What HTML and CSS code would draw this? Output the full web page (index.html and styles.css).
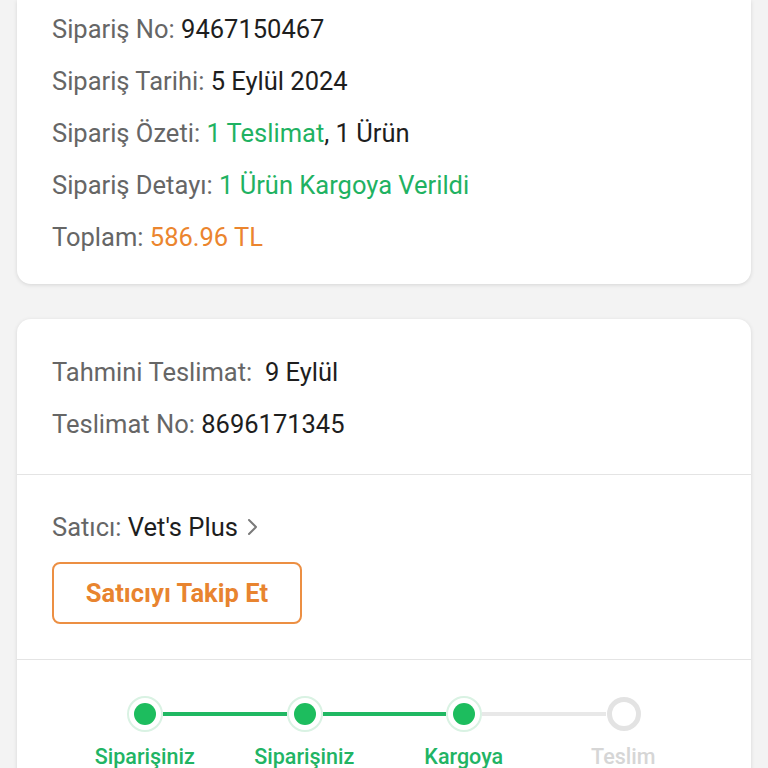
FILE: index.html
```html
<!DOCTYPE html>
<html lang="tr">
<head>
    <meta charset="UTF-8">
    <meta name="viewport" content="width=device-width, initial-scale=1.0">
    <title>Sipariş Detayı</title>
    <link rel="stylesheet" href="styles.css">
</head>
<body>

    <div class="page">
        <div class="card card-top">
            <div class="row"><span class="label">Sipariş No:</span> <span class="value">9467150467</span></div>
            <div class="row"><span class="label">Sipariş Tarihi:</span> <span class="value">5 Eylül 2024</span></div>
            <div class="row"><span class="label">Sipariş Özeti:</span> <span class="green">1 Teslimat</span><span class="value">, 1 Ürün</span></div>
            <div class="row"><span class="label">Sipariş Detayı:</span> <span class="green">1 Ürün Kargoya Verildi</span></div>
            <div class="row"><span class="label">Toplam:</span> <span class="orange">586.96 TL</span></div>
        </div>

        <div class="card">
            <div class="section delivery">
                <div class="row"><span class="label">Tahmini Teslimat:</span>&nbsp; <span class="value">9 Eylül</span></div>
                <div class="row"><span class="label">Teslimat No:</span> <span class="value">8696171345</span></div>
            </div>

            <div class="section seller">
                <div class="row seller-row">
                    <span class="label">Satıcı:</span>&nbsp;<span class="value">Vet's Plus</span>
                    <svg class="chevron" width="12" height="18" viewBox="0 0 12 18">
                        <path d="M3 2 L10 9 L3 16" fill="none" stroke="#7a7a7a" stroke-width="2" stroke-linecap="round" stroke-linejoin="round"/>
                    </svg>
                </div>
                <button class="follow-btn">Satıcıyı Takip Et</button>
            </div>

            <div class="section steps">
                <div class="track">
                    <span class="dot done"><span class="dot-inner"></span></span>
                    <span class="line line-done"></span>
                    <span class="dot done"><span class="dot-inner"></span></span>
                    <span class="line line-done"></span>
                    <span class="dot done"><span class="dot-inner"></span></span>
                    <span class="line"></span>
                    <span class="dot pending"><span class="dot-ring"></span></span>
                </div>
                <div class="step-labels">
                    <div class="step-label active">Siparişiniz<br>Alındı</div>
                    <div class="step-label active">Siparişiniz<br>Hazırlanıyor</div>
                    <div class="step-label active">Kargoya<br>Verildi</div>
                    <div class="step-label">Teslim<br>Edildi</div>
                </div>
            </div>
        </div>
    </div>

</body>
</html>
```

FILE: styles.css
```css
body {
    margin: 0;
    background: #f3f3f3;
    font-family: Roboto, 'Noto Sans', sans-serif;
    height: 768px;
    overflow: hidden;
}

.page {
    padding: 0 17px;
}

.card {
    background: white;
    border-radius: 14px;
    box-shadow: 0px 1px 4px rgba(0, 0, 0, 0.12);
    margin-top: 35px;
}

.card-top {
    margin-top: 0;
    border-radius: 0 0 14px 14px;
    padding: 3px 35px 21px;
}

.row {
    font-size: 25.5px;
    line-height: 52px;
    white-space: nowrap;
}

.label {
    color: #666666;
}

.value {
    color: #1e1e1e;
}

.green {
    color: #1fb262;
}

.orange {
    color: #eb852e;
}

.section {
    padding: 0 35px;
    border-bottom: 1px solid #e4e4e4;
}

.section:last-child {
    border-bottom: none;
}

.delivery {
    padding-top: 27px;
    padding-bottom: 24px;
}

.seller {
    padding-top: 26px;
    padding-bottom: 35px;
}

.seller-row {
    display: flex;
    align-items: center;
}

.chevron {
    margin-left: 8px;
}

.follow-btn {
    display: block;
    margin-top: 9px;
    width: 250px;
    height: 62px;
    background: white;
    border: 2px solid #ec8f43;
    border-radius: 8px;
    color: #e8842f;
    font-family: Roboto, sans-serif;
    font-size: 25.5px;
    font-weight: bold;
    cursor: pointer;
}

.steps {
    padding: 36px 48px 0;
}

.track {
    display: flex;
    align-items: center;
    padding: 0 61px 0 62px;
}

.dot {
    width: 36px;
    height: 36px;
    flex: none;
    border-radius: 50%;
    box-sizing: border-box;
    display: flex;
    align-items: center;
    justify-content: center;
}

.dot.done {
    border: 2px solid #d9f2e3;
    background: white;
}

.dot-inner {
    width: 22px;
    height: 22px;
    border-radius: 50%;
    background: #1dbd5e;
}

.dot-ring {
    width: 34px;
    height: 34px;
    box-sizing: border-box;
    border-radius: 50%;
    border: 5px solid #e3e3e3;
    background: white;
}

.line {
    flex: 1;
    height: 4px;
    background: #e8e8e8;
}

.line-done {
    background: #1fb862;
}

.step-labels {
    display: grid;
    grid-template-columns: repeat(4, 1fr);
    margin-top: 11px;
}

.step-label {
    text-align: center;
    font-size: 21.5px;
    font-weight: 500;
    line-height: 28px;
    color: #d6d6d6;
}

.step-label.active {
    color: #21b464;
}
```
